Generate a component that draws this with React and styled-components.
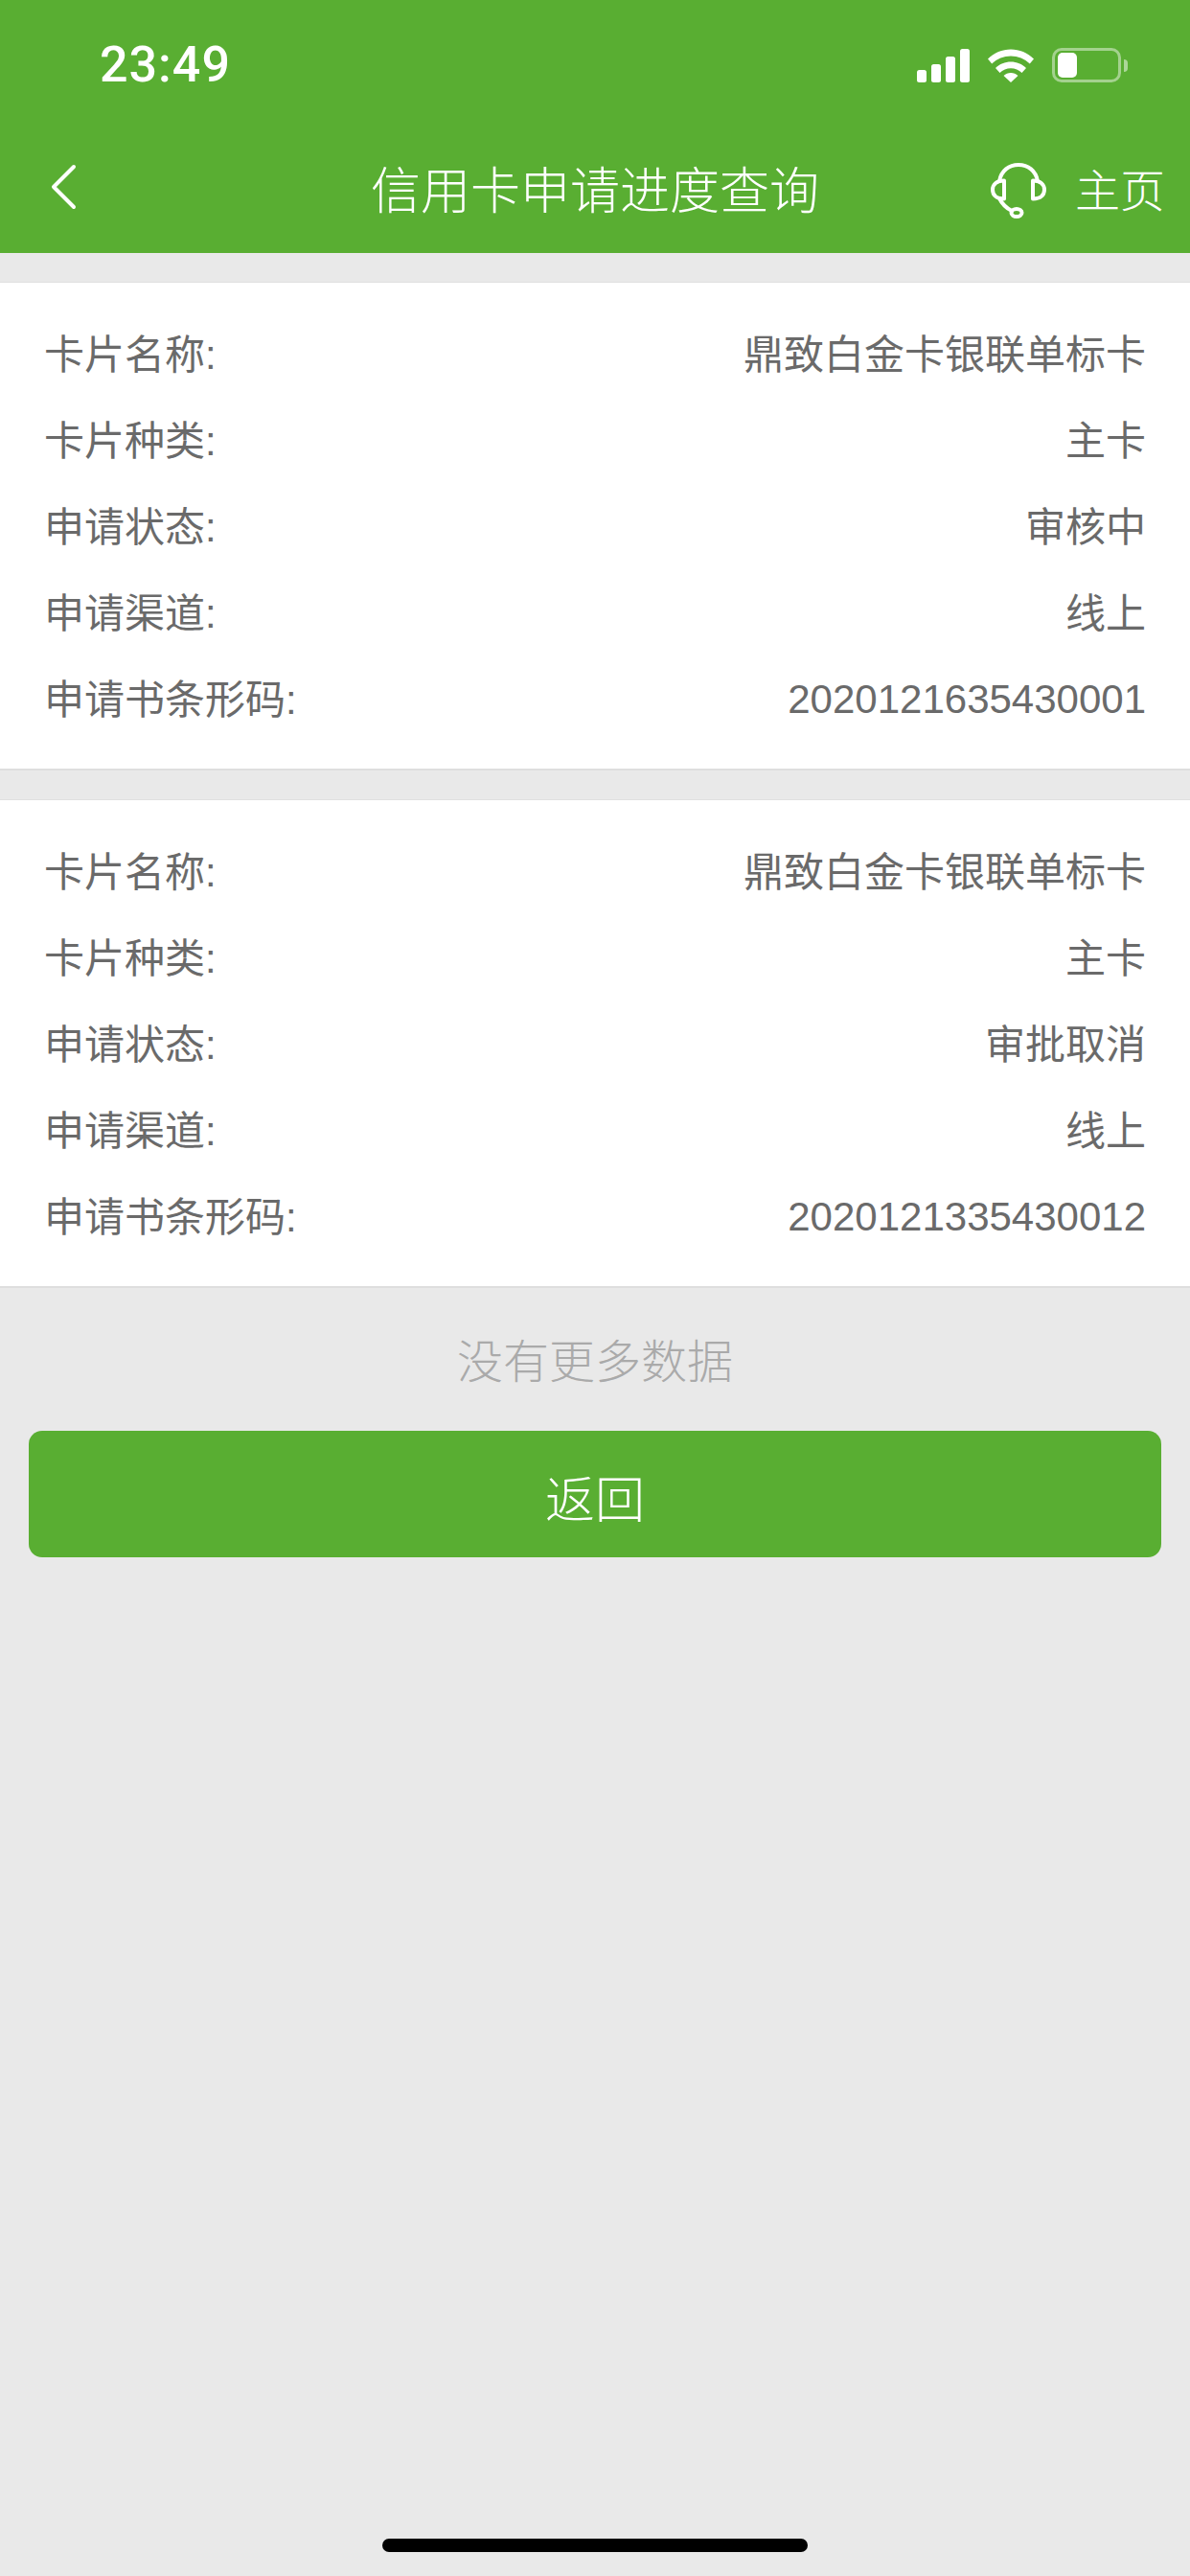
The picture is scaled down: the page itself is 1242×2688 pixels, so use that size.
import React from 'react';
import styled, { createGlobalStyle } from 'styled-components';

const GlobalStyle = createGlobalStyle`
  html, body {
    margin: 0;
    padding: 0;
    background: #e9e9e9;
  }
`;

const cards = [
  [
    ['卡片名称:', '鼎致白金卡银联单标卡'],
    ['卡片种类:', '主卡'],
    ['申请状态:', '审核中'],
    ['申请渠道:', '线上'],
    ['申请书条形码:', '2020121635430001', true],
  ],
  [
    ['卡片名称:', '鼎致白金卡银联单标卡'],
    ['卡片种类:', '主卡'],
    ['申请状态:', '审批取消'],
    ['申请渠道:', '线上'],
    ['申请书条形码:', '2020121335430012', true],
  ],
];

const App = () => {
  return (
    <Page>
      <GlobalStyle />
      <Header>
        <StatusBar>
          <Clock>23:49</Clock>
          <StatusIcons>
            <SignalIcon />
            <WifiIcon />
            <Battery>
              <BatteryLevel />
            </Battery>
          </StatusIcons>
        </StatusBar>
        <NavBar>
          <BackButton>
            <svg width="28" height="48" viewBox="0 0 28 48" fill="none">
              <path d="M25 3L4 24l21 21" stroke="#fff" strokeWidth="4" strokeLinecap="round" strokeLinejoin="round" />
            </svg>
          </BackButton>
          <Title>信用卡申请进度查询</Title>
          <NavActions>
            <HeadsetIcon />
            <HomeLink>主页</HomeLink>
          </NavActions>
        </NavBar>
      </Header>

      <CardList>
        {cards.map((rows, i) => (
          <Card key={i}>
            {rows.map(([label, value, numeric]) => (
              <Row key={label}>
                <RowText>{label}</RowText>
                <RowText $numeric={numeric}>{value}</RowText>
              </Row>
            ))}
          </Card>
        ))}
      </CardList>

      <NoMore>没有更多数据</NoMore>
      <BackAction>返回</BackAction>

      <HomeIndicator />
    </Page>
  );
};

const SignalIcon = () => (
  <svg width="55" height="35" viewBox="0 0 55 35" fill="#fff">
    <rect x="0" y="22" width="10" height="13" rx="2.5" />
    <rect x="15" y="16" width="10" height="19" rx="2.5" />
    <rect x="30" y="8" width="10" height="27" rx="2.5" />
    <rect x="45" y="0" width="10" height="35" rx="2.5" />
  </svg>
);

const WifiIcon = () => (
  <svg width="48" height="35" viewBox="0 0 48 35" fill="#fff">
    <path d="M0 10.5C6.500 4 15 .5 24 .5S41.500 4 48 10.500l-4.200 5C38.400 10.300 31.400 7.500 24 7.500S9.600 10.300 4.200 15.500z" />
    <path d="M8 20C12.200 15.700 18 13.400 24 13.400s11.800 2.300 16 6.600l-4.500 5C32.400 22 28.300 20.300 24 20.300s-8.400 1.700-11.500 4.700z" />
    <path d="M16.500 28c2-1.900 4.700-2.900 7.500-2.900s5.500 1 7.500 2.900L24 35z" />
  </svg>
);

const HeadsetIcon = () => (
  <svg width="60" height="60" viewBox="0 0 60 60" fill="none" stroke="#fff" strokeWidth="4" strokeLinecap="round" strokeLinejoin="round">
    <path d="M9 19C11 8 19 2 29 2s18 6 20 17" />
    <path d="M14 18.500v19c-8 0-12-4-12-9.500s4-9.500 12-9.500z" />
    <path d="M44 18.500v19c8 0 12-4 12-9.500s-4-9.500-12-9.500z" />
    <path d="M9 37c3 6 7 10 13 13" />
    <ellipse cx="27" cy="52" rx="5.500" ry="4" />
  </svg>
);

// Styled Components
const Page = styled.div`
  min-height: 2688px;
  display: flex;
  flex-direction: column;
  background: #e9e9e9;
  font-family: "Liberation Sans", "Noto Sans CJK SC", sans-serif;
`;

const Header = styled.header`
  height: 264px;
  display: flex;
  flex-direction: column;
  background: #59ae32;
  color: #fff;
`;

const StatusBar = styled.div`
  height: 132px;
  display: flex;
  justify-content: space-between;
  align-items: flex-start;
  padding: 0 72px 0 104px;
  box-sizing: border-box;
`;

const Clock = styled.span`
  margin-top: 38px;
  font-family: "Roboto", "Liberation Sans", sans-serif;
  font-size: 52px;
  line-height: 60px;
  font-weight: 500;
  letter-spacing: 1px;
`;

const StatusIcons = styled.div`
  display: flex;
  align-items: center;
  margin-top: 50px;
  gap: 19px;
`;

const Battery = styled.div`
  position: relative;
  width: 72px;
  height: 36px;
  box-sizing: border-box;
  padding: 2px 3px;
  border: 3px solid rgba(255, 255, 255, 0.45);
  border-radius: 10px;

  &::after {
    content: '';
    position: absolute;
    top: 9px;
    right: -10px;
    width: 4px;
    height: 13px;
    border-radius: 0 6px 6px 0;
    background: rgba(255, 255, 255, 0.5);
  }
`;

const BatteryLevel = styled.div`
  width: 20px;
  height: 100%;
  background: #fff;
  border-radius: 5px;
`;

const NavBar = styled.div`
  flex: 1;
  display: grid;
  grid-template-columns: 1fr auto 1fr;
  align-items: center;
  padding: 4px 26px 0;
`;

const BackButton = styled.div`
  width: 28px;
  height: 48px;
  margin: 0 0 10px 26px;
`;

const Title = styled.h1`
  margin: 0;
  text-align: center;
  font-size: 52px;
  line-height: 64px;
  font-weight: 300;
`;

const NavActions = styled.div`
  display: flex;
  align-items: center;
  justify-content: flex-end;
  gap: 28px;
`;

const HomeLink = styled.span`
  font-size: 47px;
  line-height: 56px;
  font-weight: 300;
`;

const CardList = styled.div`
  display: flex;
  flex-direction: column;
  gap: 30px;
  padding-top: 30px;
`;

const Card = styled.section`
  display: flex;
  flex-direction: column;
  padding: 30px 46px 27px 46px;
  background: #fff;
  border-top: 1px solid #e0e0e0;
  border-bottom: 2px solid #dedede;
`;

const Row = styled.div`
  height: 90px;
  display: flex;
  justify-content: space-between;
  align-items: center;
  font-size: 42px;
  font-weight: 400;
  color: #6a6a6a;
`;

// CJK glyphs sit a little low in the Liberation line box
const RowText = styled.span`
  padding-bottom: ${(p) => (p.$numeric ? '0' : '8px')};
`;

const NoMore = styled.div`
  margin-top: 48px;
  text-align: center;
  font-size: 48px;
  line-height: 60px;
  font-weight: 300;
  color: #aaa;
`;

const BackAction = styled.button`
  height: 132px;
  margin: 41px 30px 0;
  padding: 4px 0 0;
  border: none;
  border-radius: 14px;
  background: #59ae32;
  color: #fff;
  font-family: inherit;
  font-size: 52px;
  font-weight: 300;
`;

const HomeIndicator = styled.div`
  width: 444px;
  height: 14px;
  margin: auto auto 25px;
  border-radius: 7px;
  background: #000;
`;

export default App;
